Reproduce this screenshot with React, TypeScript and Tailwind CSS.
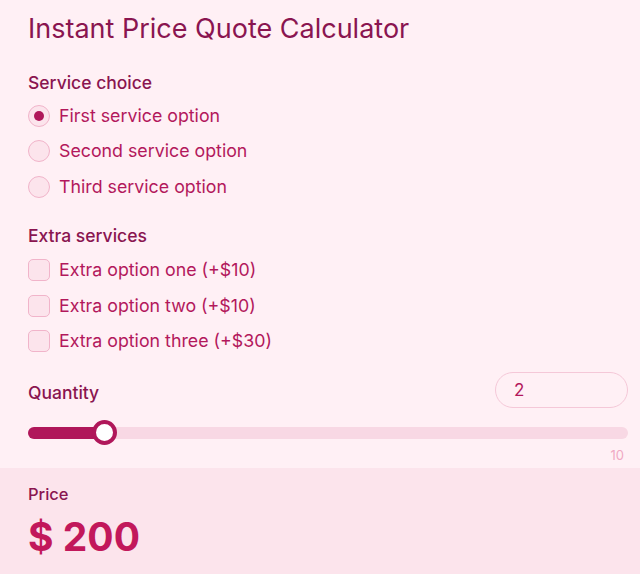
import React, { useState } from "react";

const font = { fontFamily: "Inter, 'Noto Sans', sans-serif" };

export default function App() {
  const [service, setService] = useState(0);
  const [extras, setExtras] = useState([false, false, false]);
  const [qty, setQty] = useState(2);

  const services = ["First service option", "Second service option", "Third service option"];
  const extraList = [
    { label: "Extra option one (+$10)", price: 10 },
    { label: "Extra option two (+$10)", price: 10 },
    { label: "Extra option three (+$30)", price: 30 },
  ];
  const base = [100, 150, 200][service];
  const extraSum = extras.reduce((s, e, i) => s + (e ? extraList[i].price : 0), 0);
  const price = (base + extraSum) * qty;

  const min = 1;
  const max = 10;
  const frac = (qty - min) / (max - min);
  const thumbLeft = `calc(${frac} * (100% - 25px))`;
  const fillWidth = `calc(${frac} * (100% - 25px) + 12.5px)`;

  return (
    <div className="w-[640px] h-[574px] bg-[#fff0f5] flex flex-col overflow-hidden" style={font}>
      <div className="pl-7 pr-3 pt-3 flex flex-col">
        <h1 className="text-[27px] leading-[34px] font-normal text-[#8a1550]">
          Instant Price Quote Calculator
        </h1>

        <div className="mt-[25px] flex flex-col">
          <div className="text-[17.5px] leading-[24px] font-medium text-[#8a1550]">Service choice</div>
          <div className="mt-[3px] flex flex-col">
            {services.map((s, i) => (
              <label key={s} className="h-[35.5px] flex items-center gap-[9px] cursor-pointer" onClick={() => setService(i)}>
                <span className="w-[22px] h-[22px] rounded-full border border-[#f1b4ca] bg-[#fce4ec] flex items-center justify-center">
                  {service === i && <span className="w-[10px] h-[10px] rounded-full bg-[#b0175a]" />}
                </span>
                <span className="text-[17.8px] leading-[24px] text-[#b3185c]">{s}</span>
              </label>
            ))}
          </div>
        </div>

        <div className="mt-[19px] flex flex-col">
          <div className="text-[17.5px] leading-[24px] font-medium text-[#8a1550]">Extra services</div>
          <div className="mt-[5px] flex flex-col">
            {extraList.map((e, i) => (
              <label
                key={e.label}
                className="h-[35.5px] flex items-center gap-[9px] cursor-pointer"
                onClick={() => setExtras(extras.map((v, j) => (j === i ? !v : v)))}
              >
                <span className="w-[22px] h-[22px] rounded-[5px] border border-[#f1b4ca] bg-[#fce4ec] flex items-center justify-center">
                  {extras[i] && <span className="w-[10px] h-[10px] rounded-[2px] bg-[#b0175a]" />}
                </span>
                <span className="text-[17.8px] leading-[24px] text-[#b3185c]">{e.label}</span>
              </label>
            ))}
          </div>
        </div>

        <div className="mt-[13px] flex items-center justify-between">
          <div className="text-[17.5px] leading-[24px] font-medium text-[#8a1550] mt-[6px]">Quantity</div>
          <input
            type="text"
            value={qty}
            onChange={(ev) => {
              const n = parseInt(ev.target.value, 10);
              if (!isNaN(n)) setQty(Math.min(max, Math.max(min, n)));
            }}
            className="w-[133px] h-[36px] rounded-full border border-[#f5c8d8] bg-[#fff0f5] px-[18px] text-[17px] text-[#b3185c] outline-none"
            style={font}
          />
        </div>

        <div className="mt-[12px] relative h-[26px] flex items-center">
          <div className="w-full h-[12px] rounded-full bg-[#f8d8e4] relative">
            <div className="h-[12px] rounded-full bg-[#b0175a]" style={{ width: fillWidth }} />
          </div>
          <div
            className="absolute top-0 w-[25px] h-[25px] rounded-full bg-white border-[4px] border-[#b0175a]"
            style={{ left: thumbLeft }}
          />
        </div>
        <div className="flex justify-end pr-[4px] mt-[1px]">
          <span className="text-[13px] leading-[16px] text-[#f0a9c3]">10</span>
        </div>
      </div>

      <div className="mt-[5px] flex-1 bg-[#fce4ec] pl-7 pr-3 pt-[14px] flex flex-col">
        <div className="text-[16.5px] leading-[24px] font-medium text-[#8a1550]">Price</div>
        <div className="mt-[7px] text-[39px] leading-[48px] font-bold text-[#c2185b]">$ {price}</div>
      </div>
    </div>
  );
}
